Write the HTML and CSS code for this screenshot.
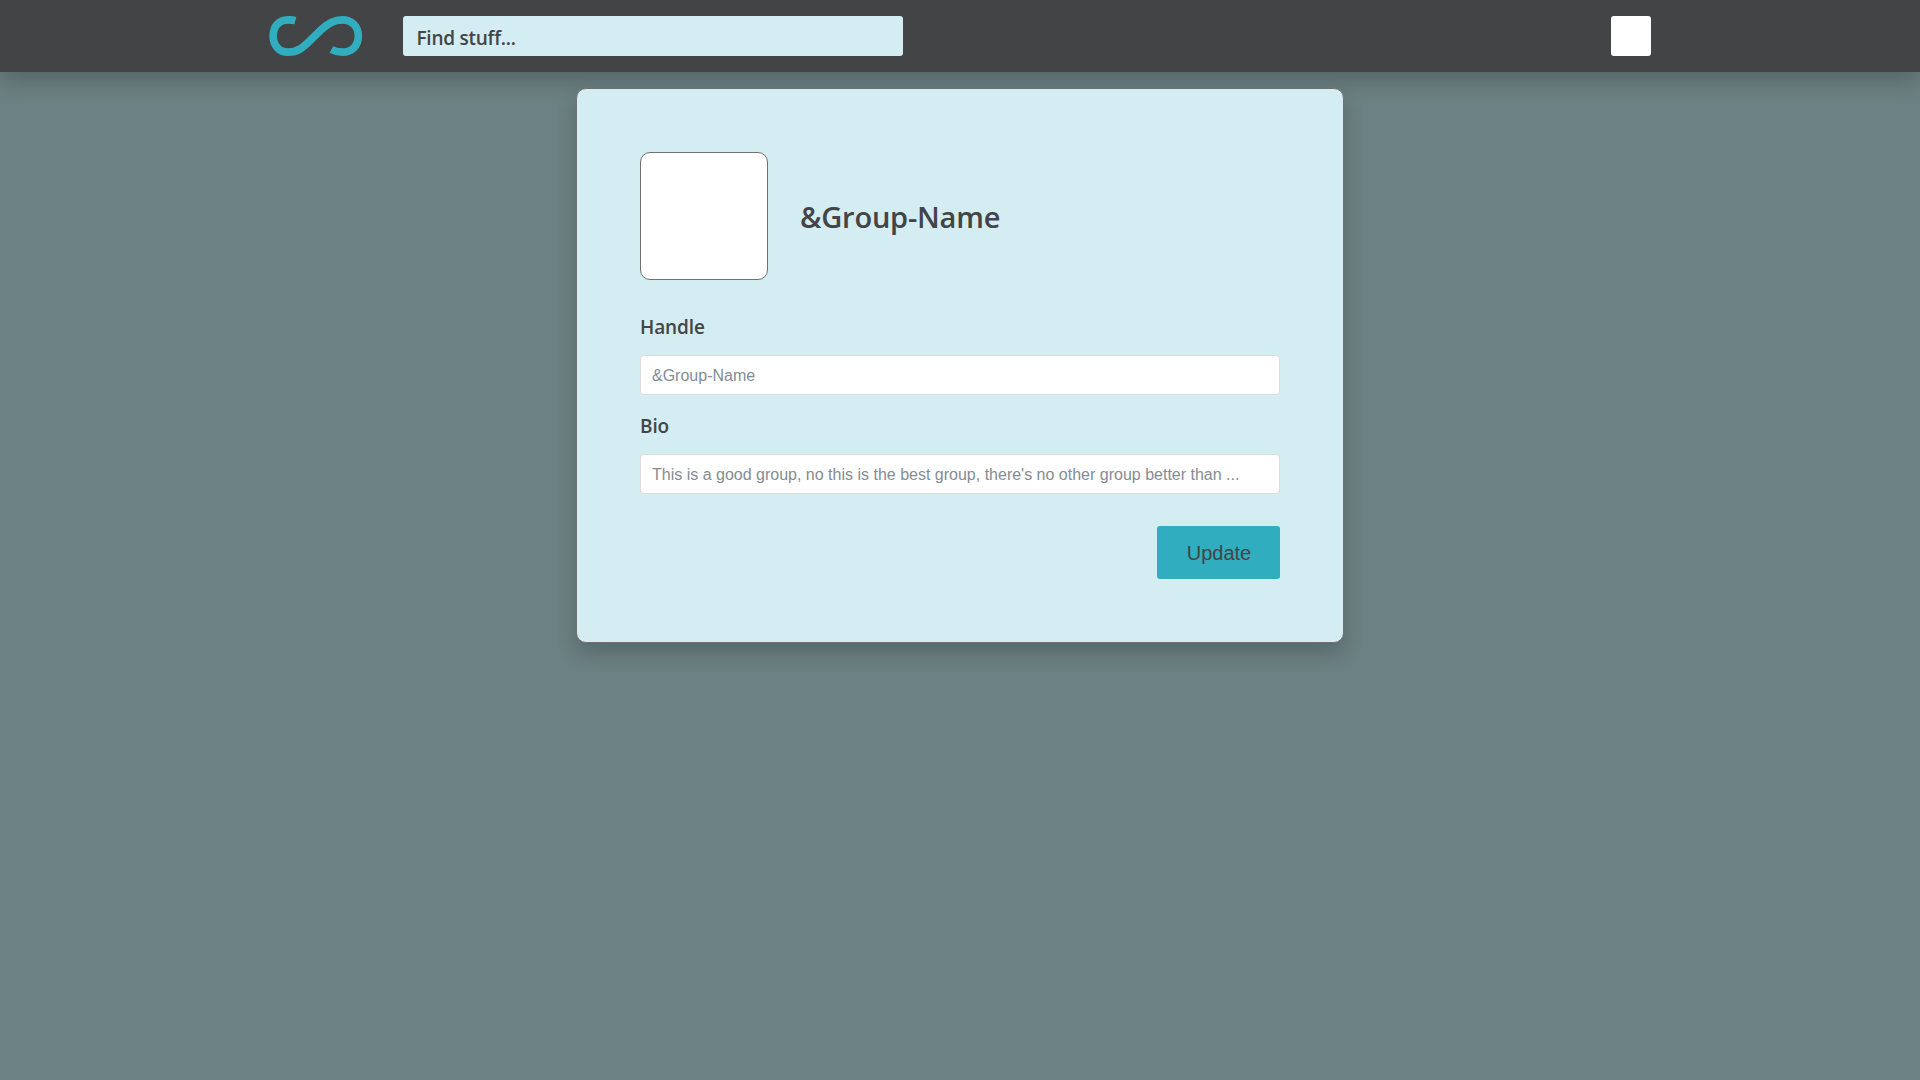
FILE: index.html
```html
<!DOCTYPE html>
<html lang="en">
<head>
<meta charset="utf-8">
<title>Group settings</title>
<link rel="stylesheet" href="styles.css">
</head>
<body>
<header class="topbar">
  <a class="logo" aria-label="Home">
    <svg width="94" height="40" viewBox="0 0 282 120">
      <path d="M79 14C68 11 61 11.5 57 11.5C28 11.5 12.500 33 12.500 60C12.500 88 30 108.500 57 108.500C87 108.500 103 94 124 73L155 43C174 24 193 11.500 220 11.500C249 11.500 268 32 268 60C268 88 250 108.500 220 108.500C208 108.500 197 106 187 101" fill="none" stroke="#30aec0" stroke-width="23"/>
    </svg>
  </a>
  <input class="search" type="text" placeholder="Find stuff...">
  <div class="user"></div>
</header>
<main class="card">
  <div class="profile">
    <div class="avatar"></div>
    <h1 class="name">&amp;Group-Name</h1>
  </div>
  <form class="form">
    <label class="label" for="handle">Handle</label>
    <input class="field" id="handle" type="text" placeholder="&amp;Group-Name">
    <label class="label" for="bio">Bio</label>
    <input class="field" id="bio" type="text" placeholder="This is a good group, no this is the best group, there's no other group better than ...">
    <button class="update" type="button">Update</button>
  </form>
</main>
</body>
</html>
```
FILE: styles.css
```css
* { box-sizing: border-box; }
body {
  margin: 0;
  min-height: 100vh;
  background: #6c8183;
  color: #434445;
  font-family: "Segoe UI", "Open Sans", sans-serif;
}
.topbar {
  display: flex;
  align-items: center;
  height: 72px;
  padding: 0 269px 0 268.5px;
  background: #434445;
  box-shadow: 0 10px 20px rgba(0, 0, 0, .2);
}
.logo { display: flex; }
.search {
  width: 500px;
  height: 40px;
  margin-left: 40px;
  padding: 4px 14px 0;
  border: 0;
  border-radius: 3px;
  background: #d3edf2;
  font: 600 19px "Segoe UI", "Open Sans", sans-serif;
  letter-spacing: -.25px;
}
.search::placeholder { color: #434445; opacity: 1; }
.user {
  width: 40px;
  height: 40px;
  margin-left: auto;
  border-radius: 3px;
  background: #fff;
}
.card {
  width: 768px;
  margin: 16px auto 0;
  padding: 63px;
  border: 1px solid #757070;
  border-radius: 10px;
  background: #d3edf2;
  box-shadow: 0 10px 20px rgba(0, 0, 0, .2);
}
.profile { display: flex; align-items: center; gap: 32px; }
.avatar {
  width: 128px;
  height: 128px;
  border: 1px solid #757070;
  border-radius: 10px;
  background: #fff;
}
.name { margin: 2px 0 0; font-size: 29px; font-weight: 600; line-height: 40px; letter-spacing: -.2px; }
.form { display: flex; flex-direction: column; margin-top: 32px; }
.label { height: 27px; margin-bottom: 16px; font-size: 19px; font-weight: 600; line-height: 31px; letter-spacing: -.1px; }
.field {
  height: 40px;
  margin-bottom: 16px;
  padding: 1px 11px 0;
  border: 1px solid #dcdcdc;
  border-radius: 4px;
  background: #fff;
  font: 16px "Liberation Sans", sans-serif;
}
.field::placeholder { color: #838c94; opacity: 1; }
.update {
  align-self: flex-end;
  width: 123px;
  height: 53px;
  margin-top: 16px;
  padding: 2px 0 0 1px;
  border: 0;
  border-radius: 3px;
  background: #30aec0;
  color: #434445;
  font: 20px "Liberation Sans", sans-serif;
}
```
